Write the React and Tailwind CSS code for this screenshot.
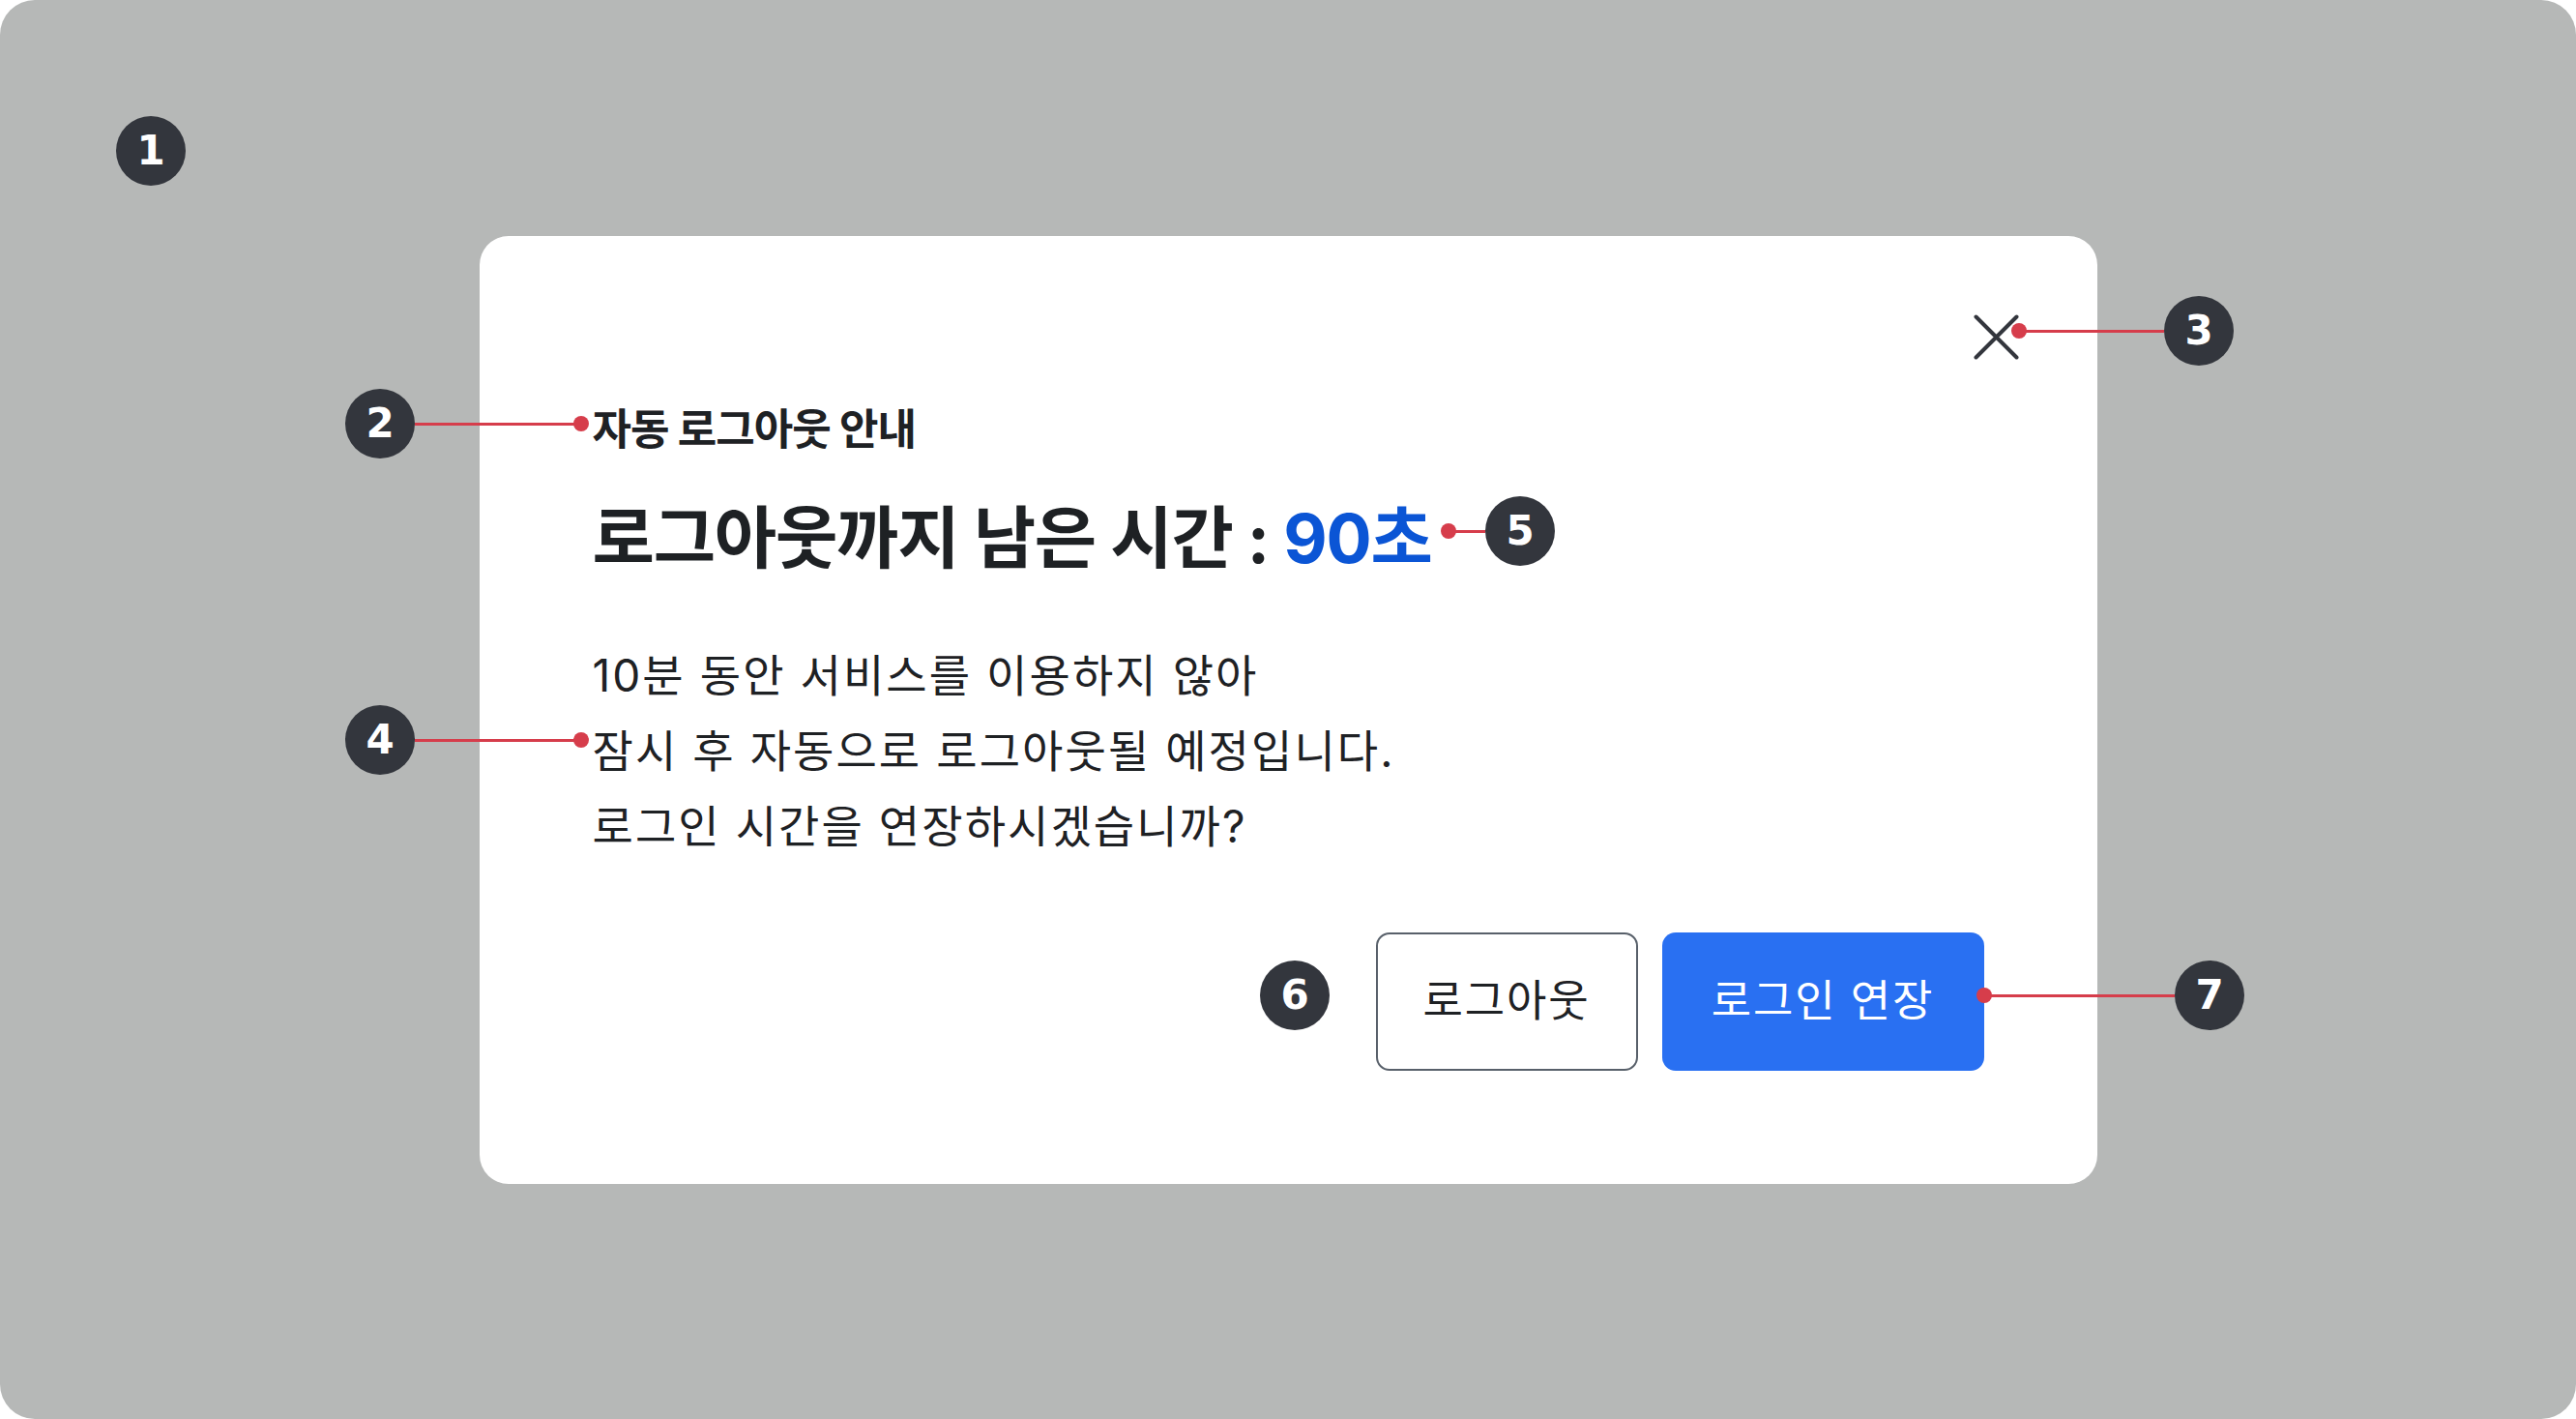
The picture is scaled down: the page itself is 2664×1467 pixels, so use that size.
const badges = [
  { n: 1, x: 156, y: 156 },
  { n: 2, x: 393, y: 438 },
  { n: 3, x: 2274, y: 342 },
  { n: 4, x: 393, y: 765 },
  { n: 5, x: 1572, y: 549 },
  { n: 6, x: 1339, y: 1029 },
  { n: 7, x: 2285, y: 1029 },
];

const leaders = [
  { from: 429, to: 601, y: 438, dot: 601 },
  { from: 2088, to: 2238, y: 342, dot: 2088 },
  { from: 429, to: 601, y: 765, dot: 601 },
  { from: 1498, to: 1536, y: 549, dot: 1498 },
  { from: 2052, to: 2249, y: 1029, dot: 2052 },
];

function Badge({ n, x, y }) {
  return (
    <div
      className="absolute w-[72px] h-[72px] rounded-full bg-[#33363d] flex items-center justify-center text-white font-bold text-[42px] leading-none font-['DejaVu_Sans',sans-serif]"
      style={{ left: x - 36, top: y - 36 }}
    >
      {n}
    </div>
  );
}

function Leader({ from, to, y, dot }) {
  return (
    <>
      <div
        className="absolute h-[3px] bg-[#d63d4b]"
        style={{ left: from, top: y - 1.5, width: to - from }}
      />
      <div
        className="absolute w-[16px] h-[16px] rounded-full bg-[#d63d4b]"
        style={{ left: dot - 8, top: y - 8 }}
      />
    </>
  );
}

export default function App() {
  return (
    <div className="w-[2664px] h-[1467px] bg-white font-['Inter','Noto_Sans_CJK_KR',sans-serif]">
      <div className="relative w-full h-full rounded-[36px] bg-[#b6b8b7] flex items-center justify-center">
        <div className="relative w-[1673px] bg-white rounded-[30px] pt-[170px] pb-[117px] px-[117px] text-[#1e2124]">
          <button className="absolute top-[81px] right-[81px] w-[47px] h-[47px]" aria-label="닫기">
            <svg width="47" height="47" viewBox="0 0 47 47">
              <path d="M2.5 2.5L44.5 44.5M44.5 2.5L2.5 44.5" stroke="#33363d" strokeWidth="4" strokeLinecap="round" />
            </svg>
          </button>
          <p className="text-[44px] leading-[60px] font-bold tracking-[-0.023em]">자동 로그아웃 안내</p>
          <h2 className="mt-[38px] text-[70px] leading-[90px] font-bold tracking-[-0.018em]">
            로그아웃까지 남은 시간 : <span className="text-[#0b55d5]">90초</span>
          </h2>
          <p className="mt-[57px] text-[46px] leading-[78px] tracking-[0.045em]">
            10분 동안 서비스를 이용하지 않아
            <br />
            잠시 후 자동으로 로그아웃될 예정입니다.
            <br />
            로그인 시간을 연장하시겠습니까?
          </p>
          <div className="mt-[71px] flex justify-end gap-[25px]">
            <button className="h-[143px] w-[271px] border-2 border-[#58606a] rounded-[14px] text-[45px] tracking-[0.04em] bg-white text-[#1e2124]">
              로그아웃
            </button>
            <button className="h-[143px] w-[333px] bg-[#2970f2] rounded-[14px] text-[45px] tracking-[0.04em] text-white">
              로그인 연장
            </button>
          </div>
        </div>
        {leaders.map((l, i) => (
          <Leader key={i} {...l} />
        ))}
        {badges.map((b) => (
          <Badge key={b.n} {...b} />
        ))}
      </div>
    </div>
  );
}
